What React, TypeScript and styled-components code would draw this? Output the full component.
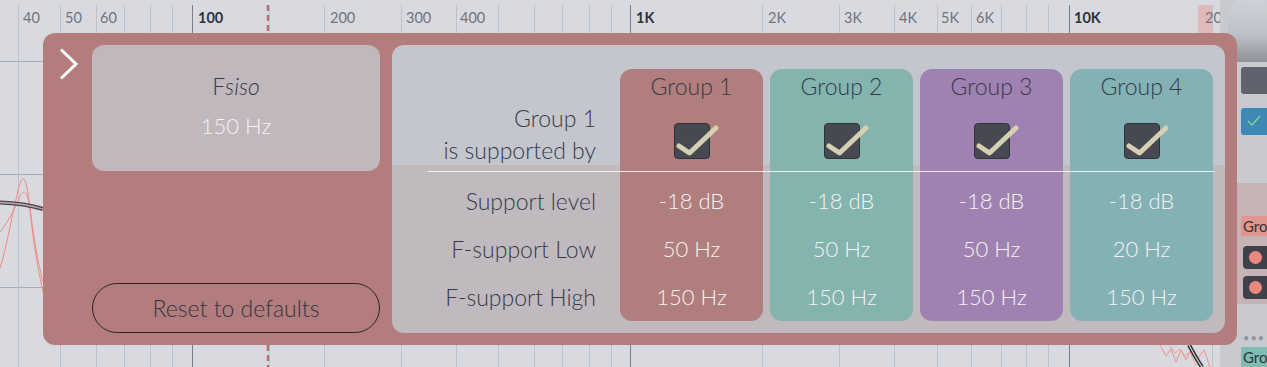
import React from 'react';
import styled, { createGlobalStyle } from 'styled-components';

const Global = createGlobalStyle`
  html, body { margin: 0; padding: 0; background: #d9dae0; overflow: hidden; }
  body { font-family: Lato, "Open Sans", sans-serif; }
`;

const Page = styled.div`
  position: relative;
  width: 1267px;
  height: 367px;
  display: flex;
  overflow: hidden;
  background: #d9dae0;
`;

const ChartArea = styled.div`
  width: 1220px;
  height: 367px;
  flex: none;
  svg { display: block; }
`;

const Sidebar = styled.div`
  flex: 1;
  display: flex;
  flex-direction: column;
  background: #c8cad0;
  padding-left: 8px;
  font-family: Lato, sans-serif;
  overflow: hidden;
`;

const TopCap = styled.div`
  height: 63px;
  border-top-left-radius: 14px;
  background: linear-gradient(to bottom, #cfd1d7 0%, #bfc1c8 55%, #8f919a 100%);
`;

const SideBox = styled.div<{ $bg: string; $top: number; $h: number }>`
  margin-top: ${(p) => p.$top}px;
  margin-left: 13px;
  height: ${(p) => p.$h}px;
  background: ${(p) => p.$bg};
  border-radius: 3px 0 0 3px;
  display: flex;
  align-items: center;
  padding-left: 6px;
`;

const PinkSection = styled.div`
  margin-top: 48px;
  height: 123px;
  background: #c5b3b6;
  display: flex;
  flex-direction: column;
  padding-top: 33px;
  box-sizing: border-box;
`;

const SideTag = styled.div<{ $bg: string }>`
  margin-left: 13px;
  height: 20px;
  line-height: 20px;
  padding-left: 2px;
  background: ${(p) => p.$bg};
  color: #2e323a;
  font-size: 15px;
  overflow: hidden;
  white-space: nowrap;
`;

const DotBox = styled.div<{ $top: number }>`
  margin-top: ${(p) => p.$top}px;
  margin-left: 15px;
  height: 23px;
  background: #3e4149;
  border-radius: 4px 0 0 4px;
  display: flex;
  align-items: center;
  padding-left: 6px;
`;

const Dot = styled.div`
  width: 13px;
  height: 13px;
  border-radius: 50%;
  background: #ea8880;
`;

const Ellipsis = styled.div`
  margin-top: 28px;
  margin-left: 15px;
  height: 16px;
  color: #8e929c;
  font-size: 11px;
  letter-spacing: 1px;
  line-height: 12px;
`;

/* ---------- popup ---------- */

const Popup = styled.div`
  position: absolute;
  left: 43px;
  top: 33px;
  width: 1194px;
  height: 312px;
  box-sizing: border-box;
  padding: 12px 12px 12px 0;
  background: #b27d7c;
  border-radius: 12px;
  display: flex;
  gap: 12px;
  font-family: Lato, "Open Sans", sans-serif;
  font-weight: 300;
`;

const ChevronCol = styled.div`
  width: 37px;
  flex: none;
  padding: 3px 0 0 16px;
  box-sizing: border-box;
`;

const LeftCol = styled.div`
  width: 288px;
  flex: none;
  display: flex;
  flex-direction: column;
  justify-content: space-between;
`;

const InfoCard = styled.div`
  height: 126px;
  box-sizing: border-box;
  padding-top: 26px;
  background: #c0b8bd;
  border-radius: 12px;
  display: flex;
  flex-direction: column;
  align-items: center;
  gap: 10px;
`;

const InfoTitle = styled.div`
  height: 30px;
  line-height: 30px;
  font-size: 23px;
  color: #343a49;
  em { font-style: italic; }
`;

const InfoValue = styled.div`
  height: 30px;
  line-height: 30px;
  font-size: 22px;
  color: #f6f2f3;
`;

const ResetButton = styled.button`
  height: 50px;
  box-sizing: border-box;
  border: 1.5px solid #26272c;
  border-radius: 25px;
  background: transparent;
  font-family: inherit;
  font-weight: 300;
  font-size: 23px;
  color: #313644;
  padding: 0;
`;

const RightPanel = styled.div`
  position: relative;
  flex: 1;
  display: flex;
  gap: 7px;
  padding: 24px 12px 12px 0;
  border-radius: 12px;
  background: linear-gradient(to bottom, #c4c6ce 0, #c4c6ce 120px, #c0babf 120px, #c0babf 100%);
`;

const Divider = styled.div`
  position: absolute;
  left: 36px;
  right: 11px;
  top: 126px;
  height: 1px;
  background: rgba(255, 255, 255, 0.8);
`;

const LabelCol = styled.div`
  flex: 1;
  padding-right: 17px;
  display: flex;
  flex-direction: column;
  align-items: flex-end;
  color: #343a49;
  font-size: 23px;
`;

const LabelTop = styled.div`
  height: 102px;
  box-sizing: border-box;
  padding-bottom: 5px;
  margin-bottom: 6px;
  display: flex;
  flex-direction: column;
  justify-content: flex-end;
  align-items: flex-end;
  line-height: 32px;
`;

const Row = styled.div<{ $light?: boolean }>`
  height: 48px;
  line-height: 48px;
  white-space: nowrap;
  color: ${(p) => (p.$light ? '#f6f2f3' : 'inherit')};
`;

const GroupCol = styled.div<{ $bg: string }>`
  width: 143px;
  flex: none;
  background: ${(p) => p.$bg};
  border-radius: 12px;
  display: flex;
  flex-direction: column;
  align-items: center;
  font-size: 22px;
`;

const GroupHeader = styled.div`
  height: 34px;
  line-height: 34px;
  font-size: 23px;
  color: #343a49;
`;

const CheckRow = styled.div`
  height: 68px;
  box-sizing: border-box;
  padding-top: 20px;
  margin-bottom: 6px;
`;

const CheckBox = styled.div`
  position: relative;
  width: 36px;
  height: 36px;
  box-sizing: border-box;
  border: 1px solid #2f3238;
  border-radius: 4px;
  background: #464951;
  svg { position: absolute; left: -1px; top: -1px; overflow: visible; }
`;

const Check = () => (
  <CheckBox>
    <svg width="46" height="36" viewBox="0 0 46 36">
      <path d="M5 23 L15.5 30 L42 5" fill="none" stroke="#d5d0b2" strokeWidth="5" strokeLinecap="round" strokeLinejoin="round" />
    </svg>
  </CheckBox>
);

const Chevron = () => (
  <svg width="20" height="32" viewBox="0 0 20 32">
    <path d="M2 1.5 L17 16 L2 30.5" fill="none" stroke="#ffffff" strokeWidth="3" />
  </svg>
);

const groups = [
  { name: 'Group 1', color: '#b17e7e', level: '-18 dB', low: '50 Hz', high: '150 Hz' },
  { name: 'Group 2', color: '#83b4ad', level: '-18 dB', low: '50 Hz', high: '150 Hz' },
  { name: 'Group 3', color: '#9f82b2', level: '-18 dB', low: '50 Hz', high: '150 Hz' },
  { name: 'Group 4', color: '#83b1b4', level: '-18 dB', low: '20 Hz', high: '150 Hz' },
];

/* ---------- chart ---------- */

const gridX = [18, 60, 96, 124, 150, 172, 324, 401, 456, 498, 534, 562, 589, 611, 762, 839, 894, 937, 971, 1001, 1026, 1048, 1212];
const majorX = [192, 630, 1069];
const labels: { x: number; t: string; bold?: boolean }[] = [
  { x: 23, t: '40' }, { x: 65, t: '50' }, { x: 100, t: '60' }, { x: 198, t: '100', bold: true },
  { x: 330, t: '200' }, { x: 406, t: '300' }, { x: 460, t: '400' }, { x: 636, t: '1K', bold: true },
  { x: 768, t: '2K' }, { x: 844, t: '3K' }, { x: 899, t: '4K' }, { x: 941, t: '5K' }, { x: 976, t: '6K' },
  { x: 1074, t: '10K', bold: true }, { x: 1205, t: '20' },
];

const Chart = () => (
  <svg width="1220" height="367" viewBox="0 0 1220 367">
    <rect x="0" y="0" width="1220" height="367" fill="#d9dae0" />
    <rect x="1198" y="5" width="14" height="28" fill="#e2b9ba" />
    {[61, 174, 287].map((y) => (
      <line key={y} x1="0" x2="1220" y1={y + 0.5} y2={y + 0.5} stroke="#a8acb7" strokeWidth="1" />
    ))}
    {gridX.map((x) => (
      <line key={x} x1={x + 0.5} x2={x + 0.5} y1="5" y2="367" stroke="#bec1c9" strokeWidth="1" />
    ))}
    {majorX.map((x) => (
      <line key={x} x1={x + 0.5} x2={x + 0.5} y1="5" y2="367" stroke="#7a7e8b" strokeWidth="1" />
    ))}
    <line x1="268" x2="268" y1="5" y2="367" stroke="#b86f70" strokeWidth="2.5" strokeDasharray="6 4" />
    <line x1="269.5" x2="269.5" y1="5" y2="367" stroke="#8fc0bb" strokeWidth="0.6" />
    {labels.map((l) => (
      <text
        key={l.t + l.x}
        x={l.x}
        y="23"
        fontFamily="Lato, sans-serif"
        fontSize="14.5"
        fontWeight={l.bold ? 700 : 400}
        fill={l.bold ? '#2e323b' : '#6f737d'}
      >
        {l.t}
      </text>
    ))}
    {/* left curves */}
    <path d="M0 268 C6 250 12 215 17 195 C19 185 21 179 23 179 C26 179 28 190 30 210 C33 240 38 270 43 292" fill="none" stroke="#f08a84" strokeWidth="1" />
    <path d="M0 232 C8 222 14 210 18 201 C20 195 22 192 24 192 C27 192 29 200 31 216 C34 240 38 262 43 282" fill="none" stroke="#f08a84" strokeWidth="1" />
    <path d="M0 202.5 C15 203 30 205 43 209" fill="none" stroke="#45454c" strokeWidth="4" />
    <path d="M0 202.5 C15 203 30 205 43 209" fill="none" stroke="#c9a7a7" strokeWidth="1.3" />
    {/* bottom right curves */}
    <path d="M1160 345 L1166 356 L1171 349 L1176 362 L1181 350 L1186 360 L1192 348 L1198 358 L1204 350 L1210 367" fill="none" stroke="#f0908a" strokeWidth="1" />
    <path d="M1170 346 L1175 353 L1180 349 L1185 356 L1190 352 L1196 366" fill="none" stroke="#f0a09a" strokeWidth="1" />
    <path d="M1189 345 C1193 352 1197 360 1202 367" fill="none" stroke="#2e2e33" strokeWidth="4" />
    <path d="M1189 345 C1193 352 1197 360 1202 367" fill="none" stroke="#d9c9c9" strokeWidth="1.2" />
  </svg>
);

export default function App() {
  return (
    <Page>
      <Global />
      <ChartArea>
        <Chart />
      </ChartArea>
      <Sidebar>
        <TopCap />
        <SideBox $bg="#5f636d" $top={5} $h={28} />
        <SideBox $bg="#3d88b5" $top={14} $h={27}>
          <svg width="14" height="12" viewBox="0 0 14 12">
            <path d="M1 6 L5 10 L13 1" fill="none" stroke="#7fdc8c" strokeWidth="1.3" />
          </svg>
        </SideBox>
        <PinkSection>
          <SideTag $bg="#e2958e">Group</SideTag>
          <DotBox $top={10}><Dot /></DotBox>
          <DotBox $top={7}><Dot /></DotBox>
        </PinkSection>
        <Ellipsis>•••</Ellipsis>
        <SideTag $bg="#7fbcb2">Group</SideTag>
      </Sidebar>

      <Popup>
        <ChevronCol>
          <Chevron />
        </ChevronCol>
        <LeftCol>
          <InfoCard>
            <InfoTitle>F<em>siso</em></InfoTitle>
            <InfoValue>150 Hz</InfoValue>
          </InfoCard>
          <ResetButton>Reset to defaults</ResetButton>
        </LeftCol>
        <RightPanel>
          <LabelCol>
            <LabelTop>
              <span>Group 1</span>
              <span>is supported by</span>
            </LabelTop>
            <Row>Support level</Row>
            <Row>F-support Low</Row>
            <Row>F-support High</Row>
          </LabelCol>
          {groups.map((g) => (
            <GroupCol key={g.name} $bg={g.color}>
              <GroupHeader>{g.name}</GroupHeader>
              <CheckRow>
                <Check />
              </CheckRow>
              <Row $light>{g.level}</Row>
              <Row $light>{g.low}</Row>
              <Row $light>{g.high}</Row>
            </GroupCol>
          ))}
          <Divider />
        </RightPanel>
      </Popup>
    </Page>
  );
}
